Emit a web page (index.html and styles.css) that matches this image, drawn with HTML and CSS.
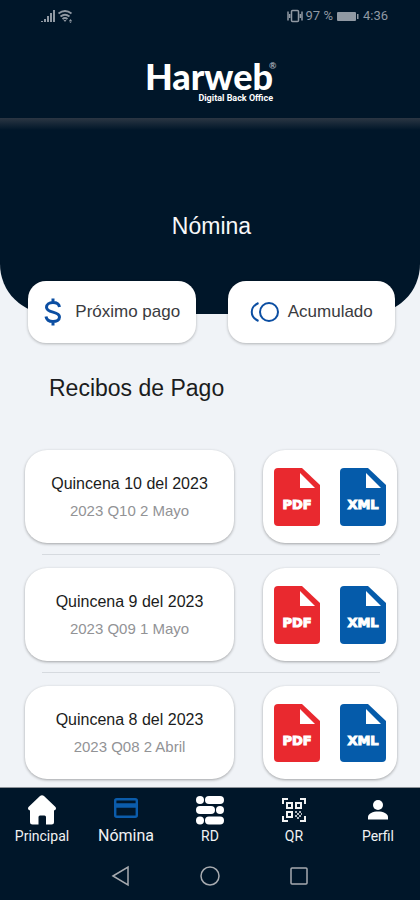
FILE: index.html
```html
<!DOCTYPE html>
<html lang="es">
<head>
<meta charset="utf-8">
<meta name="viewport" content="width=device-width, initial-scale=1">
<title>Harweb - Nómina</title>
<link rel="stylesheet" href="styles.css">
</head>
<body>
<svg width="0" height="0" class="defs" aria-hidden="true">
  <symbol id="file" viewBox="0 0 46 58">
    <path d="M4 0H28L46 17V54Q46 58 42 58H4Q0 58 0 54V4Q0 0 4 0Z"/>
    <path d="M26 5V20H41Z" fill="#fff"/>
  </symbol>
</svg>
<header class="top">
  <div class="status">
    <svg class="signal" width="32" height="14" viewBox="0 0 32 14" fill="currentColor">
      <path d="M0 12h2v1H0zM3 10h2v3H3zM6 7h2v6H6zM9 4h2v9H9zM12 1h2v12h-2z"/>
      <g fill="none" stroke="currentColor" stroke-width="1.800"><path d="M17.500 4.500Q24-.5 30.500 4.500M19.500 7.500Q24 4 28.500 7.500M21.500 10Q24 8 26.500 10"/></g>
      <path d="M22.500 11h3L24 13zM28 12l1.500-2 1.500 2zM28 12.600h3L29.500 14z"/>
    </svg>
    <div class="status-right">
      <svg width="16" height="14" viewBox="0 0 16 14" fill="none" stroke="currentColor" stroke-width="1.500"><rect x="4.500" y="1.500" width="7" height="11" rx="1"/><path d="M1 2.500v9M15 2.500v9M2.700 5v4M13.300 5v4"/></svg>
      <span class="percent">97 %</span>
      <svg width="24" height="12" viewBox="0 0 24 12" fill="currentColor"><rect x="1" y="2" width="19" height="9" rx="1"/><rect x="21" y="4" width="1.500" height="5"/></svg>
      <span>4:36</span>
    </div>
  </div>
  <div class="logo">
    <div class="brand">Harweb<sup>®</sup></div>
    <div class="tagline">Digital Back Office</div>
  </div>
</header>
<main>
  <section class="hero">
    <h1>Nómina</h1>
    <div class="actions">
      <button type="button">
        <svg width="20" height="30" viewBox="0 0 20 30" fill="none" stroke="#0b4ea2" stroke-width="3"><path d="M10 1.500V6M10 24v4.500M16.500 10C16 7 13.500 5.500 10 5.500C6 5.500 3.500 7.500 3.500 10.300C3.500 13.500 6.500 14.300 10 15.100C13.500 16 16.500 17 16.500 20C16.500 23 13.500 24.500 10 24.500C6 24.500 3.500 22.700 3 19.500"/></svg>
        <span>Próximo pago</span>
      </button>
      <button type="button">
        <svg width="30" height="22" viewBox="0 0 30 22" fill="none" stroke="#0b4ea2" stroke-width="2"><circle cx="19" cy="11" r="9"/><path d="M8.500 2C-.5 6-.5 16 8.500 20"/></svg>
        <span>Acumulado</span>
      </button>
    </div>
  </section>
  <section class="receipts">
    <h2>Recibos de Pago</h2>
    <ul>
      <li>
        <article class="card"><h3>Quincena 10 del 2023</h3><p>2023 Q10 2 Mayo</p></article>
        <div class="card files">
          <a href="#pdf10" class="pdf"><svg viewBox="0 0 46 58"><use href="#file"/><text x="23" y="41">PDF</text></svg></a>
          <a href="#xml10" class="xml"><svg viewBox="0 0 46 58"><use href="#file"/><text x="23" y="41">XML</text></svg></a>
        </div>
      </li>
      <li>
        <article class="card"><h3>Quincena 9 del 2023</h3><p>2023 Q09 1 Mayo</p></article>
        <div class="card files">
          <a href="#pdf9" class="pdf"><svg viewBox="0 0 46 58"><use href="#file"/><text x="23" y="41">PDF</text></svg></a>
          <a href="#xml9" class="xml"><svg viewBox="0 0 46 58"><use href="#file"/><text x="23" y="41">XML</text></svg></a>
        </div>
      </li>
      <li>
        <article class="card"><h3>Quincena 8 del 2023</h3><p>2023 Q08 2 Abril</p></article>
        <div class="card files">
          <a href="#pdf8" class="pdf"><svg viewBox="0 0 46 58"><use href="#file"/><text x="23" y="41">PDF</text></svg></a>
          <a href="#xml8" class="xml"><svg viewBox="0 0 46 58"><use href="#file"/><text x="23" y="41">XML</text></svg></a>
        </div>
      </li>
    </ul>
  </section>
</main>
<footer class="bottom">
  <nav class="tabs">
    <a href="#principal">
      <svg width="30" height="30" viewBox="0 0 30 30" fill="#fff"><path d="M13 1Q15-.5 17 1L28.500 12Q30 14.500 27 15.500V27Q27 29.500 24.500 29.500H19V22Q19 20.500 17.500 20.500H13Q11.500 20.500 11.500 22V29.500H5.500Q3 29.500 3 27V15.500Q0 14.500 1.500 12Z"/></svg>
      <span>Principal</span>
    </a>
    <a href="#nomina" class="active" aria-current="page">
      <svg width="30" height="30" viewBox="0 0 30 30" fill="none" stroke="#0b5cab" stroke-width="2.400"><rect x="4.200" y="4.200" width="21.600" height="17.600" rx="1.500"/><path d="M4 10.500h22" stroke-width="4.500"/></svg>
      <span>Nómina</span>
    </a>
    <a href="#rd">
      <svg width="30" height="30" viewBox="0 0 30 30" fill="#fff"><rect x="1" y="1" width="8" height="8" rx="4"/><rect x="10" y="1" width="19" height="8" rx="4"/><rect x="1" y="11" width="19" height="8" rx="4"/><rect x="21" y="11" width="8" height="8" rx="4"/><rect x="1" y="21.500" width="8" height="8" rx="4"/><rect x="10" y="21.500" width="19" height="8" rx="4"/></svg>
      <span>RD</span>
    </a>
    <a href="#qr">
      <svg width="30" height="30" viewBox="0 0 30 30" fill="none" stroke="#f1f2f3" stroke-width="2"><path d="M4 9V4h5M21 4h5v5M26 21v5h-5M9 26H4v-5"/><path d="M8 8h5v5H8zM17 8h5v5h-5zM8 17h5v5H8z"/><path d="M16 17h2m2 0h2M18 19h2m2 0h1M16 21h2m2 0h2M18 23h2" stroke="#aeb5bc"/></svg>
      <span>QR</span>
    </a>
    <a href="#perfil">
      <svg width="30" height="30" viewBox="0 0 30 30" fill="#fff"><circle cx="15" cy="10" r="5"/><path d="M5 24.500V22C5 18.500 10 16.500 15 16.500S25 18.500 25 22V24.500Z"/></svg>
      <span>Perfil</span>
    </a>
  </nav>
  <div class="system">
    <button type="button" aria-label="Atrás"><svg width="22" height="22" viewBox="0 0 22 22"><path d="M3 11L18 2V20Z"/></svg></button>
    <button type="button" aria-label="Inicio"><svg width="22" height="22" viewBox="0 0 22 22"><circle cx="11" cy="11" r="9"/></svg></button>
    <button type="button" aria-label="Recientes"><svg width="22" height="22" viewBox="0 0 22 22"><rect x="3" y="3" width="16" height="16" rx="1"/></svg></button>
  </div>
</footer>
</body>
</html>
```
FILE: styles.css
```css
* { box-sizing: border-box; }
body {
  margin: 0;
  min-height: 100vh;
  display: flex;
  flex-direction: column;
  background: #f0f3f7;
  color: #1b1c20;
  font-family: "Liberation Sans", Arial, sans-serif;
}
.defs { position: absolute; }
h1, h2, h3, p, ul { margin: 0; padding: 0; font-weight: 400; }
button { border: 0; padding: 0; background: none; color: inherit; font: inherit; }
a { color: inherit; text-decoration: none; }
svg { display: block; flex: none; }

.top { background: #001629; color: #fff; }
.status {
  display: flex;
  justify-content: space-between;
  align-items: center;
  height: 32px;
  padding: 0 32px 0 41px;
  color: #9099a3;
  font: 13px/16px Roboto, sans-serif;
}
.status-right { display: flex; align-items: center; gap: 3px; }
.logo {
  width: max-content;
  margin: 0 auto;
  padding: 26px 2px 15px 0;
}
.brand {
  position: relative;
  font: 900 36px/36px Lato, sans-serif;
}
.brand sup {
  position: absolute;
  left: 100%;
  top: 3px;
  margin-left: -4px;
  font-size: 9px;
  line-height: 9px;
  color: #9099a3;
}
.tagline {
  text-align: right;
  font: 700 9px/9px Roboto, sans-serif;
}

.hero {
  height: 196px;
  padding: 95px 25px 0 28px;
  background: linear-gradient(#2b3643, #001629 12px);
  border-radius: 0 0 50px 50px;
}
.hero h1 {
  color: #f7f8f9;
  text-align: center;
  font-size: 23px;
  line-height: 26px;
}
.actions {
  display: grid;
  grid-template-columns: 1fr 1fr;
  gap: 32px;
  margin-top: 42px;
}
.actions button {
  display: flex;
  align-items: center;
  justify-content: center;
  gap: 12px;
  height: 62px;
  border-radius: 18px;
  background: #fff;
  box-shadow: 0 1px 3px #0004;
  color: #3a3b40;
  font-size: 17px;
  white-space: nowrap;
}
.actions button + button { gap: 8px; }

.receipts { padding: 60px 23px 8px 25px; }
.receipts h2 {
  padding-left: 24px;
  font-size: 23px;
  line-height: 28px;
}
.receipts ul { margin-top: 48px; list-style: none; }
.receipts li {
  display: grid;
  grid-template-columns: 209fr 134fr;
  column-gap: 29px;
}
.receipts li + li::before {
  content: "";
  grid-column: 1 / -1;
  height: 1px;
  margin: 11px 17px 13px;
  background: #d6dadf;
}
.card {
  display: flex;
  flex-direction: column;
  align-items: center;
  justify-content: center;
  height: 93px;
  border-radius: 22px;
  background: #fff;
  box-shadow: 0 1px 3px #0005;
}
.card h3 { font-size: 16px; line-height: 27px; }
.card p { color: #929396; font-size: 15px; line-height: 27px; }
.files { flex-direction: row; gap: 20px; }
.files svg { width: 46px; height: 58px; }
.files text {
  fill: #fff;
  stroke: #fff;
  stroke-width: 1px;
  font: 700 13px "DejaVu Sans", sans-serif;
  text-anchor: middle;
}
.pdf { fill: #e9292f; }
.xml { fill: #055baa; }

.bottom {
  position: sticky;
  bottom: 0;
  margin-top: auto;
  border-top: 1px solid #8d9298;
  background: #001629;
  color: #f1f2f3;
  font: 14px/16px Roboto, sans-serif;
}
.tabs {
  display: grid;
  grid-template-columns: repeat(5, 1fr);
  padding-top: 7px;
}
.tabs a {
  display: flex;
  flex-direction: column;
  align-items: center;
  gap: 3px;
}
.tabs .active { font-size: 16px; }
.system {
  display: flex;
  justify-content: center;
  gap: 67px;
  padding: 21px 0 13px;
}
.system svg { fill: none; stroke: #a7abb0; stroke-width: 1.5; }
```
